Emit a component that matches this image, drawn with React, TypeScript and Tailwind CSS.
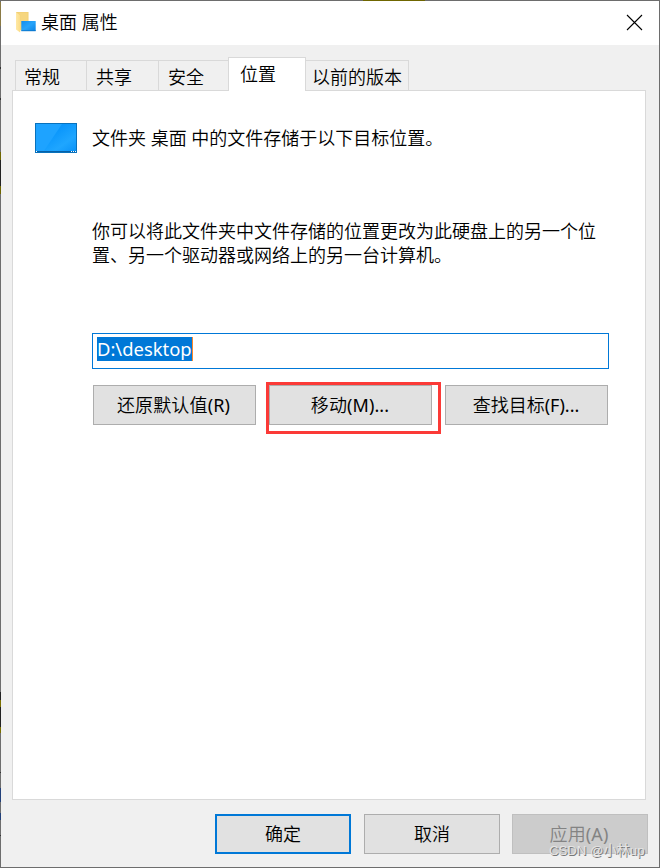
import clsx from "clsx";

interface TabItem {
  id: string;
  label: string;
  className: string;
}

const tabs: TabItem[] = [
  { id: "general", label: "常规", className: "w-[71px] pl-2" },
  { id: "sharing", label: "共享", className: "w-[72px] pl-[9px]" },
  { id: "security", label: "安全", className: "w-[70px] pl-[9px]" },
  { id: "location", label: "位置", className: "w-[78px] pl-[11px]" },
  { id: "previous", label: "以前的版本", className: "w-[103px] pl-[6px]" },
];

// Bits of the desktop that show through the window's left edge
const edgeMarks = [
  { top: 2, height: 24, color: "bg-[#8a7a45]" },
  { top: 67, height: 2, color: "bg-[#333333]" },
  { top: 98, height: 2, color: "bg-[#333333]" },
  { top: 152, height: 8, color: "bg-[#6f6600]" },
  { top: 160, height: 26, color: "bg-[#222222]" },
  { top: 186, height: 8, color: "bg-[#6f6600]" },
  { top: 692, height: 8, color: "bg-[#222222]" },
  { top: 700, height: 7, color: "bg-[#7a7000]" },
  { top: 707, height: 20, color: "bg-[#222222]" },
  { top: 727, height: 6, color: "bg-[#7a7000]" },
  { top: 772, height: 1, color: "bg-[#333333]" },
  { top: 788, height: 14, color: "bg-[#22407a]" },
  { top: 813, height: 7, color: "bg-[#22407a]" },
  { top: 835, height: 1, color: "bg-[#333333]" },
];

function FolderIcon() {
  return (
    <svg width="20" height="21" viewBox="0 0 20 21" className="mt-[11px] shrink-0">
      <defs>
        <linearGradient id="folder" x1="0" y1="0" x2="1" y2="0">
          <stop offset="0" stopColor="#ffe9a6" />
          <stop offset="1" stopColor="#fbdc87" />
        </linearGradient>
        <linearGradient id="screen" x1="0" y1="0" x2="1" y2="1">
          <stop offset="0" stopColor="#0f8df0" />
          <stop offset="0.5" stopColor="#27a4fa" />
          <stop offset="1" stopColor="#0c83e4" />
        </linearGradient>
      </defs>
      <path d="M0 0h12.5v18H4z" fill="#f0cd70" />
      <path d="M0 0.3L4.2 3v17.6L0 17.4z" fill="url(#folder)" />
      <path d="M4.2 3L1 0.6h10.8V9H5.4v9.5H4.2z" fill="#f6d67f" />
      <rect x="5.3" y="9" width="14.4" height="10" fill="url(#screen)" />
      <path d="M5.3 18.4h14.4v.8H5.3z" fill="#0870c4" />
    </svg>
  );
}

function DesktopIcon() {
  return (
    <svg width="42" height="30" viewBox="0 0 42 30" className="shrink-0">
      <defs>
        <linearGradient id="desk" x1="0" y1="0" x2="1" y2="1">
          <stop offset="0.35" stopColor="#0995fb" />
          <stop offset="0.7" stopColor="#1fa6ff" />
          <stop offset="1" stopColor="#0791f8" />
        </linearGradient>
      </defs>
      <rect x="0.5" y="0.5" width="41" height="29" fill="url(#desk)" stroke="#0872bd" />
      <path d="M1 1h26L9 28H1z" fill="#1ea3ff" />
      <path d="M1 28h40v1H1z" fill="#0760a6" />
      <path d="M1 28h1v1H1zM36 28h1v1h-1zM38 28h1v1h-1zM40 28h1v1h-1z" fill="#fff" />
    </svg>
  );
}

function DialogButton({ label, className }: { label: string; className: string }) {
  return (
    <button className={clsx("flex h-10 shrink-0 items-center justify-center whitespace-nowrap", className)}>
      {label}
    </button>
  );
}

export default function App() {
  return (
    <div className="relative h-[868px] w-[660px] overflow-hidden bg-[#6d6d6d] p-px font-['Noto_Sans','Noto_Sans_CJK_SC_DemiLight','Noto_Sans_CJK_SC',sans-serif] text-[18px] leading-6 text-black">
      {edgeMarks.map((mark) => (
        <div
          key={mark.top}
          className={clsx("absolute left-0 w-px", mark.color)}
          style={{ top: mark.top, height: mark.height }}
        />
      ))}
      <div className="absolute left-[363px] top-0 h-px w-[62px] bg-[#6f6600]" />

      <div className="flex h-[866px] w-[658px] flex-col bg-[#f0f0f0]">
        {/* Title bar */}
        <div className="flex h-11 shrink-0 items-start bg-white pl-[15px]">
          <FolderIcon />
          <span className="ml-[5px] mt-[9px] flex-1">桌面 属性</span>
          <button className="mr-[16px] mt-[13px]">
            <svg width="17" height="17" viewBox="0 0 17 17" stroke="#000" strokeWidth="1.1">
              <path d="M1 1l15 15M16 1L1 16" />
            </svg>
          </button>
        </div>

        {/* Tabs */}
        <div className="z-10 mt-3 flex h-[34px] shrink-0 items-end pl-[14px]">
          {tabs.map((tab) =>
            tab.id === "location" ? (
              <div
                key={tab.id}
                className={clsx("h-[34px] border-x border-t border-[#d9d9d9] bg-white pt-1", tab.className)}
              >
                {tab.label}
              </div>
            ) : (
              <div
                key={tab.id}
                className={clsx(
                  "mb-px h-[30px] whitespace-nowrap border-t border-[#d9d9d9] pt-1",
                  tab.id === "previous" ? "border-r" : "border-l",
                  tab.className
                )}
              >
                {tab.label}
              </div>
            )
          )}
        </div>

        {/* Location page */}
        <div className="-mt-px ml-[11px] h-[710px] w-[634px] shrink-0 border border-[#d9d9d9] bg-white">
          <div className="flex pl-[22px] pt-8">
            <DesktopIcon />
            <p className="ml-[15px] mt-[3px]">文件夹 桌面 中的文件存储于以下目标位置。</p>
          </div>
          <p className="ml-[79px] mt-[66px] whitespace-nowrap">
            你可以将此文件夹中文件存储的位置更改为此硬盘上的另一个位
            <br />
            置、另一个驱动器或网络上的另一台计算机。
          </p>
          <div className="ml-[79px] mt-[66px] flex h-9 w-[517px] border border-[#0078d7] pl-1 pt-[3px]">
            <span className="h-6 w-[95px] whitespace-nowrap bg-[#0078d7] text-[18.4px] text-white">D:\desktop</span>
            <span className="h-6 w-px bg-[#ff8728]" />
          </div>
          <div className="ml-20 mt-4 flex gap-[13px]">
            <DialogButton label="还原默认值(R)" className="w-[163px] border border-[#adadad] bg-[#e1e1e1] pr-[2px] tracking-[0.15px]" />
            <div className="relative flex">
              <DialogButton label="移动(M)..." className="w-[163px] border border-[#adadad] bg-[#e1e1e1] pr-px tracking-[0.1px]" />
              <div className="absolute -left-[3px] -top-[3px] h-[52px] w-[175px] border-3 border-[#fb3a37]" />
            </div>
            <DialogButton label="查找目标(F)..." className="w-[163px] border border-[#adadad] bg-[#e1e1e1] pr-px" />
          </div>
        </div>

        {/* Footer */}
        <div className="mt-[14px] flex pl-[214px]">
          <DialogButton label="确定" className="w-[136px] border-2 border-[#0078d7] bg-[#e1e1e1]" />
          <DialogButton label="取消" className="ml-[13px] w-[136px] border border-[#adadad] bg-[#e1e1e1]" />
          <DialogButton label="应用(A)" className="ml-3 w-[136px] border border-[#bfbfbf] bg-[#cccccc] pr-[2px] tracking-[0.1px] text-[#838383]" />
        </div>
      </div>

      <div className="absolute left-[549px] top-[841px] z-20 whitespace-nowrap font-['Liberation_Sans','Noto_Sans_CJK_SC',sans-serif] text-[13.2px] leading-5 text-[#e4e4e4] [text-shadow:1px_1px_0_#777]">
        CSDN @小林up
      </div>
    </div>
  );
}
